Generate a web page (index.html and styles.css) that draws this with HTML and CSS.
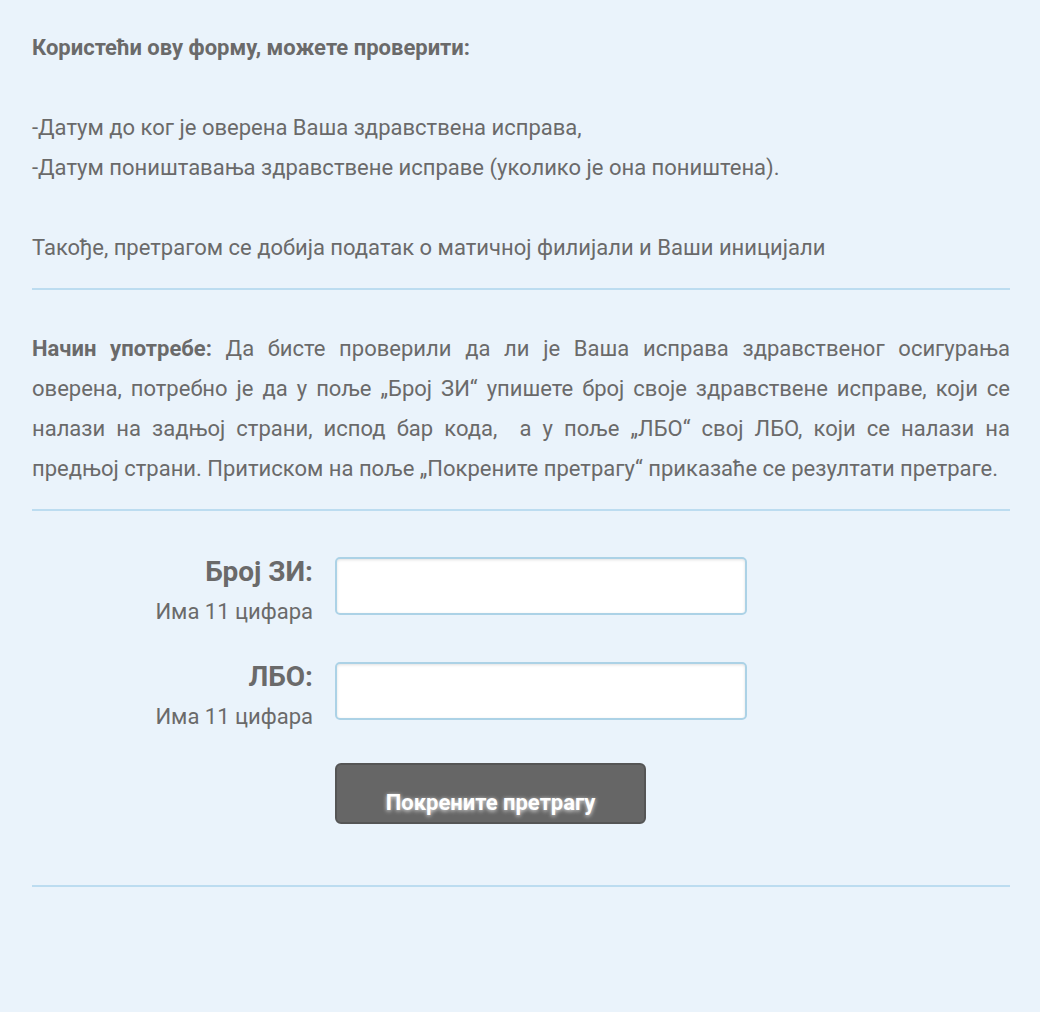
FILE: index.html
```html
<!DOCTYPE html>
<html lang="sr">
<head>
    <meta charset="UTF-8">
    <title>Провера здравствене исправе</title>
    <link rel="stylesheet" href="styles.css">
</head>
<body>
    <div class="container">
        <p class="intro">
            <strong>Користећи ову форму, можете проверити:</strong><br>
            <br>
            -Датум до ког је оверена Ваша здравствена исправа,<br>
            -Датум поништавања здравствене исправе (уколико је она поништена).<br>
            <br>
            Такође, претрагом се добија податак о матичној филијали и Ваши иницијали
        </p>

        <hr>

        <p class="uputstvo">
            <strong>Начин употребе:</strong> Да бисте проверили да ли је Ваша исправа здравственог осигурања оверена, потребно је да у поље „Број ЗИ“ упишете број своје здравствене исправе, који се налази на задњој страни, испод бар кода, &nbsp;а у поље „ЛБО“ свој ЛБО, који се налази на предњој&nbsp;страни. Притиском на поље „Покрените претрагу“ приказаће се резултати претраге.
        </p>

        <hr>

        <form id="proveraForm" class="forma">
            <div class="red">
                <label for="brojZi">
                    <span class="naziv">Број ЗИ:</span>
                    <span class="napomena">Има 11 цифара</span>
                </label>
                <input type="text" id="brojZi" maxlength="11">
            </div>

            <div class="red">
                <label for="lbo">
                    <span class="naziv">ЛБО:</span>
                    <span class="napomena">Има 11 цифара</span>
                </label>
                <input type="text" id="lbo" maxlength="11">
            </div>

            <div class="dugme-red">
                <button type="submit">Покрените претрагу</button>
            </div>
        </form>

        <hr>
    </div>
</body>
</html>
```

FILE: styles.css
```css
body {
    font-family: Roboto, "Liberation Sans", Arial, sans-serif;
    background-color: #eaf3fb;
    color: #6a6a6a;
    margin: 0;
}
.container {
    padding: 28px 30px 0 32px;
}
p {
    margin: 0;
    font-size: 22px;
    line-height: 40px;
}
strong {
    font-weight: bold;
}
.intro {
    margin-bottom: 20px;
}
hr {
    border: none;
    height: 2px;
    background: #bcdcf0;
    margin: 0;
}
.uputstvo {
    text-align: justify;
    margin: 39px 0 20px;
}
.forma {
    padding: 46px 0 61px;
}
.red {
    display: grid;
    grid-template-columns: 281px 412px;
    column-gap: 22px;
    margin-bottom: 35px;
}
label {
    text-align: right;
}
.naziv {
    display: block;
    font-size: 28px;
    font-weight: bold;
    line-height: 30px;
}
.napomena {
    display: block;
    font-size: 22px;
    line-height: 30px;
    margin-top: 10px;
}
input {
    height: 58px;
    box-sizing: border-box;
    border: 2px solid #acd2e6;
    border-radius: 5px;
    background: white;
    box-shadow: inset 0 1px 3px rgba(0, 0, 0, 0.12);
    font-size: 20px;
    padding: 0 10px;
}
.dugme-red {
    padding-left: 303px;
    margin-top: -4px;
}
button {
    width: 311px;
    height: 61px;
    box-sizing: border-box;
    background: #666;
    color: white;
    border: 2px solid #555;
    border-radius: 6px;
    font-family: Roboto, "Liberation Sans", Arial, sans-serif;
    font-size: 22px;
    font-weight: bold;
    padding: 18px 0 0;
    text-shadow: 0 1px 4px rgba(255, 255, 255, 0.9);
    cursor: pointer;
}
```
